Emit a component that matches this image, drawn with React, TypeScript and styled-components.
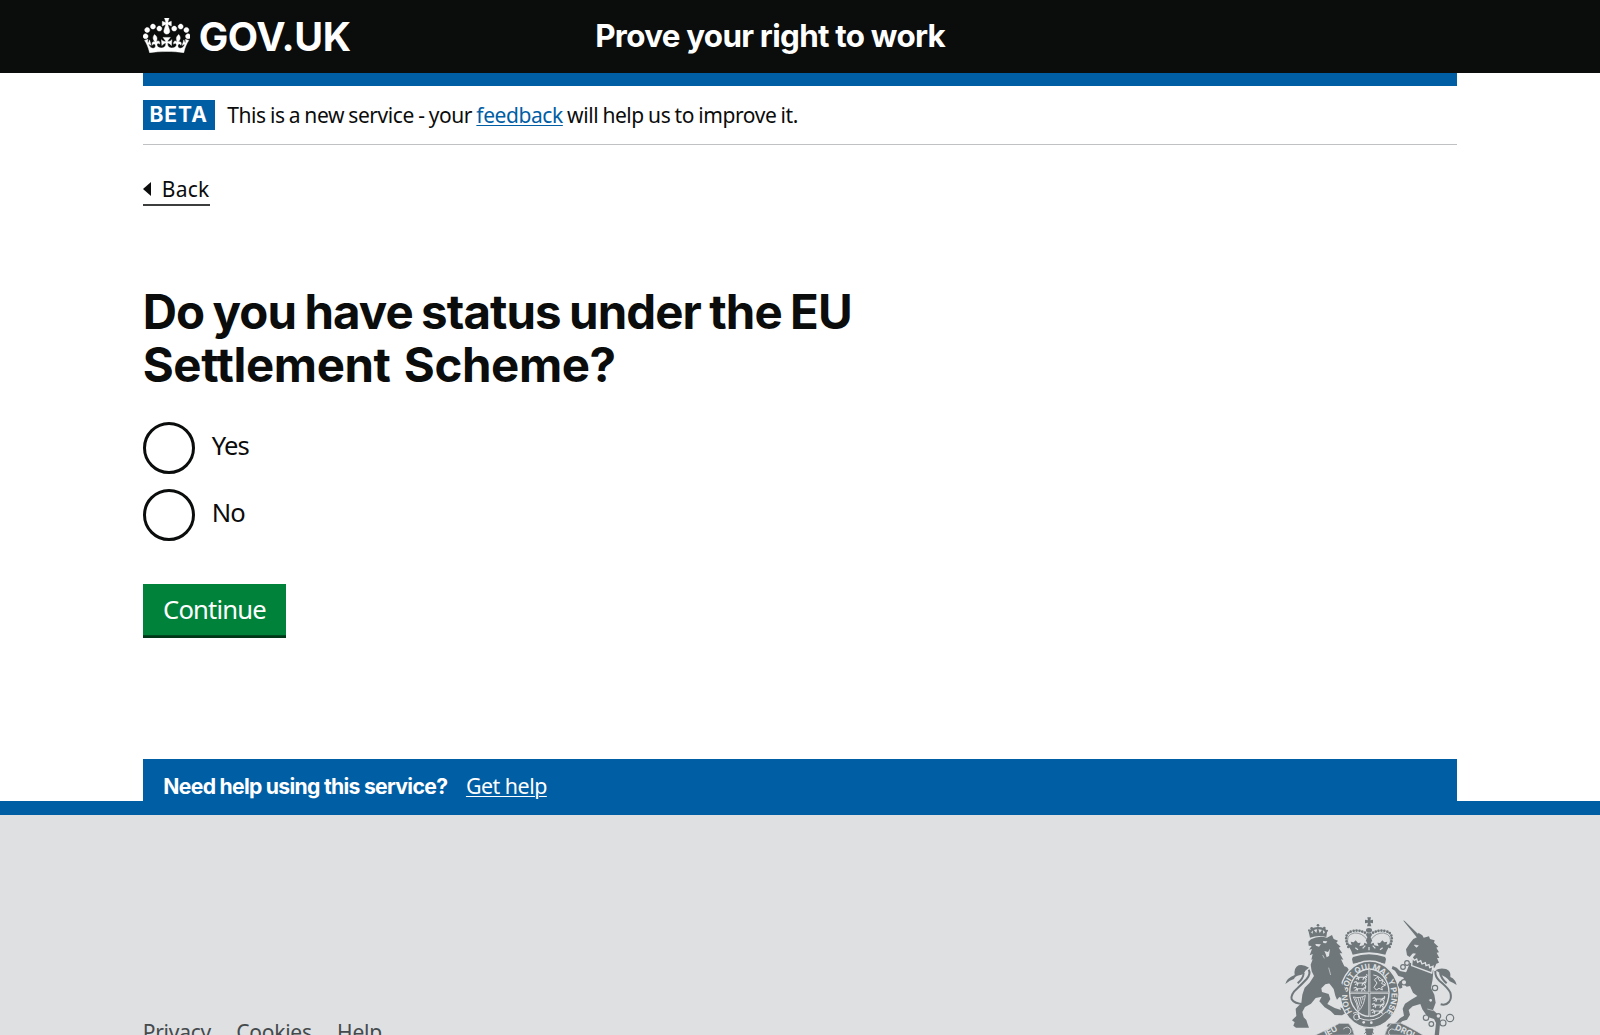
import React from "react";
import styled, { createGlobalStyle, css } from "styled-components";

const ink = "#0b0c0c";
const blue = "#005ea5";
const grey = "#dee0e2";
const crestGrey = "#6f777b";

const GlobalStyle = createGlobalStyle`
  *, *::before, *::after { box-sizing: border-box; }
  html, body { margin: 0; padding: 0; background: #fff; overflow: hidden; }
  body { height: 1035px; }
`;

const regular = css`
  font-family: "Noto Sans", "Open Sans", sans-serif;
  font-weight: 400;
`;

const bold = css`
  font-family: Inter, "Noto Sans", sans-serif;
  font-weight: 700;
`;

const Page = styled.div`
  ${regular}
  height: 1035px;
  overflow: hidden;
  display: flex;
  flex-direction: column;
  color: ${ink};
  white-space: nowrap;
`;

const Container = styled.div`
  width: 1314.6px;
  margin: 0 auto;
`;

const Header = styled.header`
  height: 72.6px;
  flex: none;
  background: ${ink};
`;

const HeaderRow = styled(Container)`
  height: 100%;
  display: grid;
  grid-template-columns: 452.5px 1fr;
  align-items: center;
`;

const LogoLink = styled.a`
  display: flex;
  align-items: center;
  gap: 8.4px;
  color: #fff;
  text-decoration: none;
`;

const Crown = styled.svg`
  width: 47.6px;
  height: 35px;
  margin-top: -2px;
  display: block;
`;

const LogoText = styled.span`
  ${bold}
  font-size: 39.4px;
  line-height: 48px;
  letter-spacing: -0.4px;
  padding-top: 1.6px;
`;

const ServiceName = styled.span`
  ${bold}
  font-size: 31.4px;
  line-height: 40px;
  letter-spacing: -0.7px;
  word-spacing: -0.2px;
  color: #fff;
`;

const HeaderBar = styled(Container)`
  height: 13.8px;
  flex: none;
  background: ${blue};
`;

const PhaseBanner = styled(Container)`
  height: 58.8px;
  flex: none;
  display: flex;
  align-items: center;
  gap: 12.5px;
  border-bottom: 1.4px solid #bfc1c3;
`;

const PhaseTag = styled.strong`
  ${bold}
  width: 72px;
  height: 30px;
  display: flex;
  align-items: center;
  justify-content: center;
  background: ${blue};
  color: #fff;
  font-size: 21px;
  line-height: 28px;
  letter-spacing: 1px;
`;

const PhaseText = styled.span`
  font-size: 21px;
  line-height: 28px;
  letter-spacing: -0.42px;
  word-spacing: -0.8px;
`;

const FeedbackLink = styled.a`
  color: ${blue};
  text-decoration: underline;
  text-decoration-thickness: 1.4px;
  text-underline-offset: 2px;
`;

const Main = styled(Container)`
  height: 613.5px;
  flex: none;
  display: flex;
  flex-direction: column;
  align-items: flex-start;
`;

const BackLink = styled.a`
  display: flex;
  align-items: center;
  gap: 11px;
  margin-top: 28.5px;
  height: 32px;
  border-bottom: 2px solid #3c3d3d;
  font-size: 21px;
  line-height: 28px;
  letter-spacing: 0.3px;
  color: ${ink};
  text-decoration: none;
`;

const Arrow = styled.span`
  width: 0;
  height: 0;
  border: 7px solid transparent;
  border-left-width: 0;
  border-right: 8.2px solid ${ink};
  margin-top: 1px;
`;

const Heading = styled.h1`
  ${bold}
  margin: 79px 0 0;
  font-size: 47.4px;
  line-height: 53.6px;
`;

const HeadingLine = styled.span<{ $tracking: number; $gap: number }>`
  display: block;
  letter-spacing: ${(p) => p.$tracking}px;
  word-spacing: ${(p) => p.$gap}px;
`;

const Radios = styled.div`
  margin-top: 30.4px;
  display: flex;
  flex-direction: column;
  gap: 15px;
`;

const RadioLabel = styled.label`
  display: flex;
  align-items: center;
  gap: 17px;
  height: 52px;
`;

const RadioCircle = styled.input`
  appearance: none;
  width: 52px;
  height: 52px;
  margin: 0;
  border: 3px solid ${ink};
  border-radius: 50%;
`;

const RadioText = styled.span`
  font-size: 25.6px;
  line-height: 34px;
  letter-spacing: -0.9px;
  padding-bottom: 4px;
`;

const Button = styled.button`
  ${regular}
  margin-top: 42.6px;
  width: 143.6px;
  height: 54.4px;
  border: 0;
  padding: 0 0 1.4px;
  background: #00823b;
  box-shadow: inset 0 -2.7px 0 #003618;
  color: #fff;
  font-size: 25.6px;
  line-height: 34px;
  letter-spacing: -0.8px;
`;

const HelpBar = styled(Container)`
  height: 42.6px;
  flex: none;
  display: flex;
  align-items: center;
  gap: 18.6px;
  padding: 12px 0 0 20.6px;
  background: ${blue};
  color: #fff;
`;

const HelpTitle = styled.strong`
  ${bold}
  font-size: 21.2px;
  line-height: 28px;
  letter-spacing: -0.68px;
  word-spacing: -0.2px;
`;

const HelpLink = styled.a`
  font-size: 21.4px;
  line-height: 28px;
  letter-spacing: -0.5px;
  color: #fff;
  text-decoration: underline;
  text-decoration-thickness: 1.4px;
  text-underline-offset: 2px;
`;

const Footer = styled.footer`
  flex: 1;
  min-height: 0;
  overflow: hidden;
  border-top: 14px solid ${blue};
  background: ${grey};
`;

const FooterRow = styled(Container)`
  display: flex;
  justify-content: space-between;
  padding-top: 102px;
`;

const FooterLinks = styled.nav`
  display: flex;
  gap: 25.4px;
  padding-top: 101px;
`;

const FooterLink = styled.a`
  color: #454a4d;
  font-size: 21px;
  line-height: 28px;
  letter-spacing: -0.26px;
  text-decoration: none;
`;

const Crest = styled.svg`
  width: 172px;
  height: 118px;
  display: block;
`;

const CrestText = styled.text`
  ${bold}
  fill: ${grey};
`;

function CrownLogo() {
  return (
    <Crown viewBox="0 0 132 97" aria-hidden="true">
      <path
        fill="#fff"
        fillRule="evenodd"
        stroke="#fff"
        strokeWidth="1.2"
        d="M25 30.2c3.5 1.5 7.7-.2 9.1-3.7 1.5-3.6-.2-7.8-3.9-9.2-3.6-1.4-7.6.3-9.1 3.9-1.4 3.5.3 7.5 3.9 9zM9 39.5c3.6 1.5 7.8-.2 9.2-3.7 1.5-3.6-.2-7.8-3.9-9.1-3.6-1.5-7.6.2-9.1 3.8-1.4 3.5.3 7.5 3.8 9zM4.4 57.2c3.5 1.5 7.7-.2 9.1-3.8 1.5-3.6-.2-7.7-3.9-9.1-3.5-1.5-7.6.3-9.1 3.8-1.4 3.5.3 7.6 3.9 9.1zm38.3-21.4c3.5 1.5 7.7-.2 9.1-3.8 1.5-3.6-.2-7.7-3.9-9.1-3.6-1.5-7.6.3-9.1 3.8-1.3 3.6.4 7.7 3.9 9.1zm64.4-5.6c-3.6 1.5-7.8-.2-9.1-3.7-1.5-3.6.2-7.8 3.8-9.2 3.6-1.4 7.7.3 9.2 3.9 1.3 3.5-.4 7.5-3.9 9zm15.9 9.3c-3.6 1.5-7.7-.2-9.1-3.7-1.5-3.6.2-7.8 3.7-9.1 3.6-1.5 7.7.2 9.2 3.8 1.5 3.5-.3 7.5-3.8 9zm4.7 17.7c-3.6 1.5-7.8-.2-9.2-3.8-1.5-3.6.2-7.7 3.9-9.1 3.6-1.5 7.7.3 9.2 3.8 1.3 3.5-.4 7.6-3.9 9.1zM89.3 35.8c-3.6 1.5-7.8-.2-9.2-3.8-1.4-3.6.2-7.7 3.9-9.1 3.6-1.5 7.7.3 9.2 3.8 1.4 3.6-.3 7.7-3.9 9.1zM69.7 17.7l8.9 4.7V9.3l-8.9 2.8c-.2-.3-.5-.6-.9-.9L72.4 0H59.6l3.5 11.2c-.3.3-.6.5-.9.9l-8.8-2.8v13.1l8.8-4.7c.3.3.6.7.9.9l-5 15.4v.1c-.2.8-.4 1.6-.4 2.4 0 4.1 3.1 7.5 7 8.1h.2c.3 0 .7.1 1 .1.4 0 .7 0 1-.1h.2c4-.6 7.1-4.1 7.1-8.1 0-.8-.1-1.7-.4-2.4V34l-5.1-15.4c.4-.2.7-.6 1-.9zM66 92.8c16.9 0 32.8 1.1 47.1 3.2 4-16.9 8.9-26.7 14-33.5l-9.6-3.4c1 4.9 1.1 7.2 0 10.2-1.5-1.4-3-4.3-4.2-8.7L108.6 76c2.8-2 5-3.2 7.5-3.3-4.4 9.4-10 11.9-13.6 11.2-4.3-.8-6.3-4.6-5.6-7.9 1-4.7 5.7-5.9 8-.5 4.3-8.7-3-11.4-7.6-8.8 7.1-7.2 7.9-13.5 2.1-21.1-8 6.1-8.1 12.3-4.5 20.8-4.7-5.4-12.1-2.5-9.5 6.2 3.4-5.2 7.9-2 7.2 3.1-.6 4.3-6.4 7.8-13.5 7.2-10.3-.9-10.9-8-11.2-13.8 2.5-.5 7.1 1.8 11 7.3L80.2 60c-4.1 4.4-8 5.3-12.3 5.4 1.4-4.4 8-11.6 8-11.6H55.5s6.4 7.2 7.9 11.6c-4.2-.1-8-1-12.3-5.4l1.4 16.4c3.9-5.5 8.5-7.7 10.9-7.3-.3 5.8-.9 12.8-11.1 13.8-7.2.6-12.9-2.9-13.5-7.2-.7-5 3.8-8.3 7.1-3.1 2.7-8.7-4.6-11.6-9.4-6.2 3.7-8.5 3.6-14.7-4.6-20.8-5.8 7.6-5 13.9 2.2 21.1-4.7-2.6-11.9.1-7.7 8.8 2.3-5.5 7.1-4.2 8.1.5.7 3.3-1.3 7.1-5.7 7.9-3.5.7-9-1.8-13.5-11.2 2.5.1 4.7 1.3 7.5 3.3l-4.7-15.4c-1.2 4.4-2.7 7.2-4.3 8.7-1.1-3-.9-5.3 0-10.2l-9.5 3.4c5 6.9 9.9 16.7 14 33.5 14.8-2.1 30.8-3.2 47.7-3.2z"
      />
    </Crown>
  );
}

/* A passant lion as used in the quarters of the shield. */
function SmallLion({ x, y }: { x: number; y: number }) {
  return (
    <path
      transform={`translate(${x} ${y})`}
      fill="none"
      stroke={grey}
      strokeWidth="3.2"
      strokeLinecap="round"
      d="M3 3l5-2 4 4h18l4-3 3 3M12 6l-6 4M14 7l-2 5M28 7l-2 5M31 6l5 6M36 3q4-4 1-6"
    />
  );
}

function CrestPicture() {
  return (
    <Crest viewBox="47 36 516 354" role="img" aria-label="Royal coat of arms">
      <defs>
        <path id="garter" d="M250 322A66 78 0 1 1 352 320" />
        <path id="motto-left" d="M160 400Q182 390 222 366" />
        <path id="motto-right" d="M376 374Q400 384 440 404" />
      </defs>

      {/* lion */}
      <g fill={crestGrey}>
        <path d="M122 98l-5-22 13 10 1-14 10 12 4-18 6 18 9-12 2 14 12-10-3 20q-24-7-49 2z" />
        <circle cx="146" cy="61" r="4" />
        <circle cx="127" cy="70" r="4" />
        <circle cx="165" cy="69" r="4" />
        <circle cx="119" cy="76" r="3" />
        <circle cx="173" cy="77" r="3" />
        <path d="M120 80q3-13 25-14 24 0 28 14l-5 3q-6-10-23-10-15 1-20 10z" />
        <path d="M117 110l8-7q22-12 48-5l15-8 5 12 13 5-5 6 13 12-6 3 11 17-8 0 11 19-7-1 10 21q12 2 14 14l-7 10 1 19 7 9-5 11 4 14-2 17-13 6 1-12-12 6-4-17-9-11-14-16-18 4-12 12 2 11 20 6 5 15-9 15 22 12 19 6-2-8 11 6 4 12-10 6-22-1-12-12-18-11-16-18 7-14-18 4-14 17-18 10-8 15 4 16 8 8 3 10 5 13H80l-8-6 4-10-8-6 13-13-2-22 17-17 3-25 7-21 15-15 13-20-7-14-3-20 6-16-4 1 4-17-9 4 7-19-9 2 8-11-9-1z" />
        <path d="M48 237q4-18 28-27-3-22 12-29 14-4 31 7-6 4-11 9-4 11-18 14-12 2-16 11-12 3-26 15z" />
      </g>
      <path
        d="M118 194q7 12-6 28-15 16-27 27-22 19-18 34 8 14 36 14M103 204q-1 17-18 31"
        fill="none"
        stroke={crestGrey}
        strokeWidth="6"
      />
      <path d="M138 117l17 1-6 7-9-3zM161 108l13 1-4 6-8-1zM165 138q5 9 7 19l7-4 3-22-6 10z" fill={grey} />
      <path d="M178 188l6 22M160 150l5 10" stroke={grey} strokeWidth="2" fill="none" />

      {/* unicorn */}
      <g fill={crestGrey}>
        <path d="M402 47q2-1 4 1l44 43-6 8z" />
        <path d="M410 133l13-20 9-11 12-6 3-13 12 8 4 7 16-4 3 8 14 4-2 7 13 12-6 3 8 14-7 1 8 16-7 0 6 14-8 3-5 12-66-17-3-8q5-9 13-17-9-4-12 2l-7 8-8-5z" />
        <path d="M422 173l70 22-2 28-5 26 10 20 4 24-8 22 16 14 6 16-4 45H496l4-36-6-12-19-6-16-23-6-16-23 7-12 11 4 14-9 15-15 5-13 18-22 2-11-5 5-8 23-3 12-13 12-8-4-21 7-15 18-12 19-11-13-10-9-20-10 2-14-12z" />
        <path d="M562 240q-3-17-19-24 3-18-13-24-18-5-32 4 6 3 12 7 5 9 18 13 9 6 13 13 9 4 21 11z" />
      </g>
      <path
        d="M498 198q-1 17 12 29 26 21 33 36 5 16-4 28-9 11-25 7M512 204q4 17 20 31"
        fill="none"
        stroke={crestGrey}
        strokeWidth="6"
      />
      <path d="M429 158l6 8 7-4 3 10 9-5 4 10 10-4 2 9 9-3 2 9 10-4-4 20-60-22z" fill={crestGrey} stroke={grey} strokeWidth="4" />
      <path d="M435 120l12 2-6 5zM474 312l18 5" stroke={grey} strokeWidth="2" fill={grey} />

      {/* crown */}
      <g fill={crestGrey}>
        <path d="M294 37h11l-2 9 8-2v11l-8-2 3 11h-13l3-11-9 2V44l9 2z" />
        <ellipse cx="299" cy="76" rx="9" ry="7" />
        <path d="M251 156q48-16 96 0l3 6-3 14q-48-15-96 0l-3-14z" />
        <path d="M250 149q-7-22-20-34l17 5-3-10 9 2 6-6 7 8 8-1-4 11 13-3 2-8 9 4-4-11h18l-4 11 9-4 2 8 13 3-4-11 8 1 7-8 6 6 9-2-3 10 17-5q-13 12-20 34-48-15-98 0z" />
        <path d="M289 88h20l-5 9 5 12h-20l5-12z" />
      </g>
      <path
        d="M237 126q-18-42 14-48 21-5 45 10M361 126q18-42-14-48-21-5-45 10"
        fill="none"
        stroke={crestGrey}
        strokeWidth="8"
        strokeDasharray="0 8.8"
        strokeLinecap="round"
      />
      <path d="M238 123q-12-34 17-39 24-1 38 20M360 123q12-34-17-39-24-1-38 20" fill="none" stroke={crestGrey} strokeWidth="2" />
      <path d="M266 134l-8-6M332 134l8-6M280 130l8-8M318 130l-8-8M299 126v10" stroke={grey} strokeWidth="3.5" fill="none" />

      {/* garter and shield */}
      <ellipse cx="301" cy="268" rx="88" ry="100" fill={crestGrey} stroke={grey} strokeWidth="4" />
      <ellipse cx="300" cy="263" rx="61" ry="73" fill={grey} />
      <ellipse cx="300" cy="263" rx="57" ry="69" fill={crestGrey} />
      <path d="M300 192v144M242 263h116" stroke={grey} strokeWidth="6" />
      <path d="M300 192v144M242 263h116" stroke={crestGrey} strokeWidth="1.8" />
      <SmallLion x={255} y={212} />
      <SmallLion x={252} y={229} />
      <SmallLion x={251} y={246} />
      <SmallLion x={308} y={277} />
      <SmallLion x={306} y={295} />
      <SmallLion x={303} y={313} />
      <path
        d="M312 210q20 2 38 28M314 247l9-13-8-10 10-8 6 12 10-4-4 12 12 4-12 6 2 9-10-5-8 5z"
        fill="none"
        stroke={grey}
        strokeWidth="3"
      />
      <path d="M252 276q22 5 36-5-4 32-21 48-3-24-15-43zM259 279l11 33M266 279l7 25M273 278l4 18M280 276l1 10" fill="none" stroke={grey} strokeWidth="2.6" />
      <CrestText fontSize="24">
        <textPath href="#garter" startOffset="2">
          HON SOIT QUI MAL Y PENSE
        </textPath>
      </CrestText>
      <path d="M251 325q10-8 18 2-4 6 0 12 30 14 62-2l20-17" fill="none" stroke={grey} strokeWidth="3" />
      <circle cx="262" cy="336" r="9" fill="none" stroke={grey} strokeWidth="3" />
      <circle cx="283" cy="352" r="4" fill={grey} />
      <circle cx="306" cy="353" r="4" fill={grey} />
      <path d="M289 372h22l-4 18h-14zM299 372l-14 14M299 372l15 14" fill={crestGrey} stroke={crestGrey} strokeWidth="3" />

      {/* forelegs beside the garter */}
      <path
        d="M190 205l18 6 8 24 8 12 4 12-3 10-6 1-3 9-6-3-7 8-5-12-5-20-14-18z"
        fill={crestGrey}
      />
      <path
        d="M432 188l-22 14-18-4-10-10-12-5-3 8 10 6 10 16 14 4 6 6-16 6-6 10 6 12 8-3-1-9 18-5 12-14 10-8z"
        fill={crestGrey}
      />
      <g fill={grey} stroke={crestGrey} strokeWidth="3.5">
        <circle cx="413" cy="174" r="7" />
        <circle cx="401" cy="186" r="7" />
        <circle cx="404" cy="232" r="8" />
        <circle cx="497" cy="249" r="8" />
        <circle cx="484" cy="286" r="6" />
        <circle cx="470" cy="338" r="8" />
        <circle cx="486" cy="357" r="7" />
        <circle cx="521" cy="354" r="9" />
        <circle cx="542" cy="339" r="11" />
        <circle cx="507" cy="333" r="7" />
      </g>

      {/* motto ribbon */}
      <path d="M134 392q52-24 76-37l27 0q14 12 18 35z" fill={crestGrey} stroke={grey} strokeWidth="2" />
      <path d="M464 392q-42-26-70-38l-28 2q-16 14-20 34z" fill={crestGrey} stroke={grey} strokeWidth="2" />
      <path d="M222 372q14-12 22 2 4 8-6 14M378 376q-14-10-20 4-2 8 6 12" fill="none" stroke={grey} strokeWidth="2.5" />
      <CrestText fontSize="25">
        <textPath href="#motto-left" startOffset="12">IEU</textPath>
      </CrestText>
      <CrestText fontSize="25">
        <textPath href="#motto-right">DROI</textPath>
      </CrestText>
    </Crest>
  );
}

function RadioOption({ label }: { label: string }) {
  return (
    <RadioLabel>
      <RadioCircle type="radio" name="status" />
      <RadioText>{label}</RadioText>
    </RadioLabel>
  );
}

export default function App() {
  return (
    <>
      <GlobalStyle />
      <Page>
        <Header>
          <HeaderRow>
            <LogoLink>
              <CrownLogo />
              <LogoText>GOV.UK</LogoText>
            </LogoLink>
            <ServiceName>Prove your right to work</ServiceName>
          </HeaderRow>
        </Header>
        <HeaderBar />
        <PhaseBanner>
          <PhaseTag>BETA</PhaseTag>
          <PhaseText>
            This is a new service - your <FeedbackLink>feedback</FeedbackLink> will help us to improve it.
          </PhaseText>
        </PhaseBanner>
        <Main as="main">
          <BackLink>
            <Arrow />
            Back
          </BackLink>
          <Heading>
            <HeadingLine $tracking={-0.9} $gap={-2}>
              Do you have status under the EU
            </HeadingLine>
            <HeadingLine $tracking={-0.4} $gap={2.5}>
              Settlement Scheme?
            </HeadingLine>
          </Heading>
          <Radios>
            <RadioOption label="Yes" />
            <RadioOption label="No" />
          </Radios>
          <Button type="button">Continue</Button>
        </Main>
        <HelpBar>
          <HelpTitle>Need help using this service?</HelpTitle>
          <HelpLink>Get help</HelpLink>
        </HelpBar>
        <Footer>
          <FooterRow>
            <FooterLinks>
              <FooterLink>Privacy</FooterLink>
              <FooterLink>Cookies</FooterLink>
              <FooterLink>Help</FooterLink>
            </FooterLinks>
            <CrestPicture />
          </FooterRow>
        </Footer>
      </Page>
    </>
  );
}
